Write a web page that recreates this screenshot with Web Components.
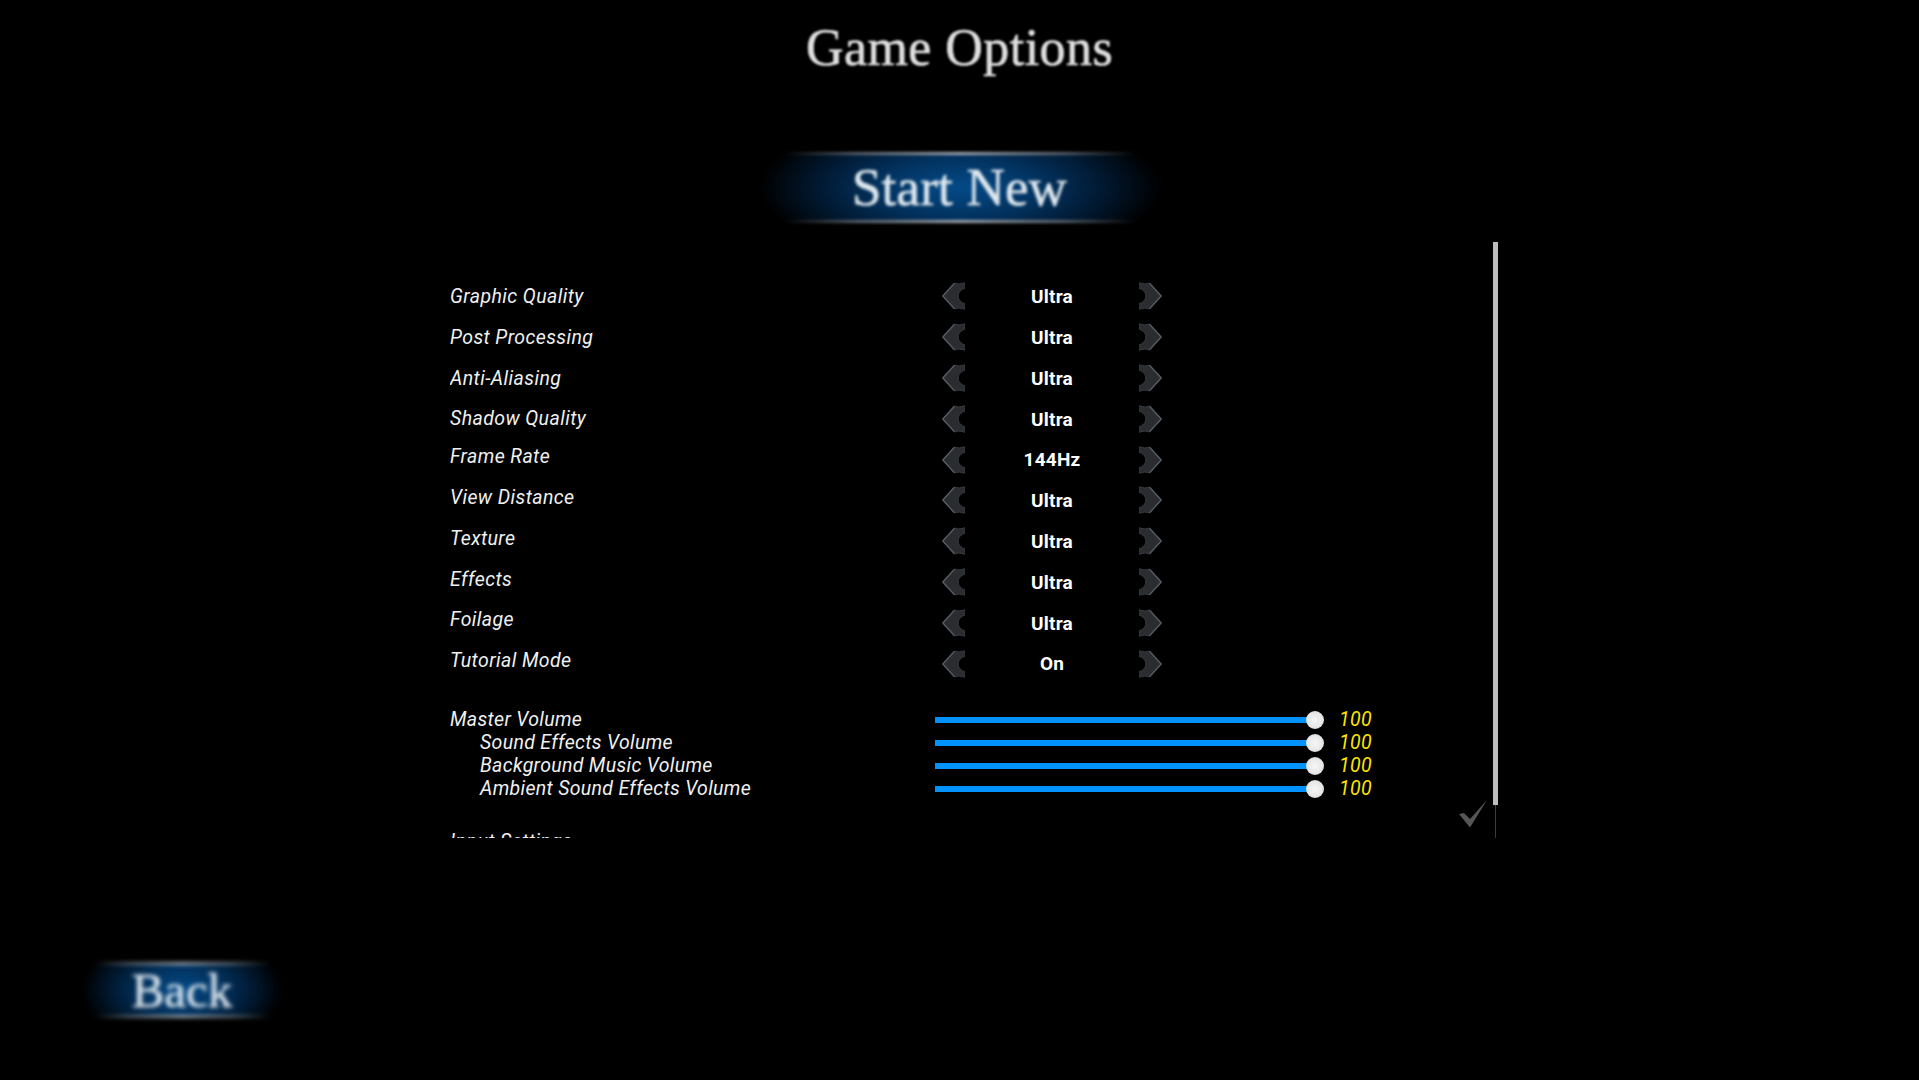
<!DOCTYPE html>
<html>
<head>
<meta charset="utf-8">
<title>Game Options</title>
<style>
  html, body { margin: 0; background: #000; overflow: hidden; }
</style>
</head>
<body>
<options-screen>
  <screen-title slot="title">Game Options</screen-title>
  <menu-banner slot="start" size="large">Start New</menu-banner>
  <options-panel slot="panel">
    <option-row label="Graphic Quality" value="Ultra"></option-row>
    <option-row label="Post Processing" value="Ultra"></option-row>
    <option-row label="Anti-Aliasing" value="Ultra" drop="2"></option-row>
    <option-row label="Shadow Quality" value="Ultra"></option-row>
    <option-row label="Frame Rate" value="144Hz" lift="6"></option-row>
    <option-row label="View Distance" value="Ultra" lift="6"></option-row>
    <option-row label="Texture" value="Ultra" lift="6"></option-row>
    <option-row label="Effects" value="Ultra" lift="4"></option-row>
    <option-row label="Foilage" value="Ultra" lift="6"></option-row>
    <option-row label="Tutorial Mode" value="On" lift="6"></option-row>
    <volume-row label="Master Volume" value="100" first></volume-row>
    <volume-row label="Sound Effects Volume" value="100" indent></volume-row>
    <volume-row label="Background Music Volume" value="100" indent></volume-row>
    <volume-row label="Ambient Sound Effects Volume" value="100" indent></volume-row>
    <section-heading>Input Settings</section-heading>
  </options-panel>
  <menu-banner slot="back" size="small">Back</menu-banner>
</options-screen>

<script>
class OptionsScreen extends HTMLElement {
    constructor() {
        super();
        this.attachShadow({ mode: 'open' });
        this.shadowRoot.innerHTML = `
            <style>
                :host {
                    display: flex;
                    flex-direction: column;
                    width: 1919px;
                    height: 1080px;
                    background: #000;
                }
                .start {
                    display: flex;
                    justify-content: center;
                    margin-top: 60px;
                }
                .panel {
                    margin: 17px 0 0 450px;
                }
                .back {
                    margin: auto 0 60px 82px;
                }
            </style>
            <slot name="title"></slot>
            <div class="start"><slot name="start"></slot></div>
            <div class="panel"><slot name="panel"></slot></div>
            <div class="back"><slot name="back"></slot></div>
        `;
    }
}

class ScreenTitle extends HTMLElement {
    constructor() {
        super();
        this.attachShadow({ mode: 'open' });
        this.shadowRoot.innerHTML = `
            <style>
                :host {
                    display: block;
                    height: 90px;
                    line-height: 95px;
                    text-align: center;
                    font-family: "Liberation Serif", serif;
                    font-size: 52px;
                    letter-spacing: 0.45px;
                    color: #dedede;
                    -webkit-text-stroke: 0.7px #dedede;
                    filter: blur(1.3px);
                }
            </style>
            <slot></slot>
        `;
    }
}

class MenuBanner extends HTMLElement {
    constructor() {
        super();
        this.attachShadow({ mode: 'open' });
        this.shadowRoot.innerHTML = `
            <style>
                :host {
                    --line: linear-gradient(to right, transparent 6%, #555f69 24%, #a4acb4 50%, #555f69 76%, transparent 94%);
                    display: flex;
                    align-items: center;
                    justify-content: center;
                    box-sizing: border-box;
                    font-family: "Liberation Serif", serif;
                    color: #dfe8ef;
                    -webkit-text-stroke: 0.6px #dfe8ef;
                    background:
                        var(--line) 0 2px / 100% 3px no-repeat,
                        var(--line) 0 calc(100% - 2px) / 100% 3px no-repeat,
                        radial-gradient(ellipse 50% 110% at 50% 50%, #034a88 0%, #02325f 40%, #011a33 70%, transparent 100%) 0 4px / 100% calc(100% - 8px) no-repeat;
                    filter: blur(1.4px);
                }
                :host([size="large"]) {
                    width: 400px;
                    height: 75px;
                    padding-bottom: 2px;
                    font-size: 53px;
                    letter-spacing: 0.2px;
                }
                :host([size="small"]) {
                    width: 200px;
                    height: 60px;
                    font-size: 49px;
                    filter: blur(1.9px);
                }
            </style>
            <slot></slot>
        `;
    }
}

class OptionsPanel extends HTMLElement {
    constructor() {
        super();
        this.attachShadow({ mode: 'open' });
        this.shadowRoot.innerHTML = `
            <style>
                :host {
                    display: flex;
                    position: relative;
                    width: 1048px;
                    height: 596px;
                }
                .content {
                    flex: 1;
                    height: 100%;
                    box-sizing: border-box;
                    padding-top: 34px;
                    overflow: hidden;
                }
                .scrollbar {
                    flex: none;
                    display: flex;
                    flex-direction: column;
                    align-items: center;
                    width: 5px;
                }
                .thumb {
                    flex: none;
                    width: 5px;
                    height: 563px;
                    background: #bdbdbd;
                }
                .rail {
                    flex: 1;
                    width: 1px;
                    background: #3c3c3c;
                }
                svg {
                    position: absolute;
                    left: 1009px;
                    top: 558px;
                }
            </style>
            <div class="content"><slot></slot></div>
            <div class="scrollbar"><div class="thumb"></div><div class="rail"></div></div>
            <svg width="28" height="28" viewBox="0 0 28 28">
                <path d="M0 14 L5 13 L11 19 L28 0 L11 27.5 Z" fill="#565656"/>
            </svg>
        `;
    }
}

class OptionRow extends HTMLElement {
    constructor() {
        super();
        this.attachShadow({ mode: 'open' });
    }

    connectedCallback() {
        const lift = this.getAttribute('lift') || 0;
        const drop = this.getAttribute('drop') || 0;
        this.shadowRoot.innerHTML = `
            <style>
                :host {
                    display: flex;
                    align-items: center;
                    height: 40.8px;
                    font-family: Roboto, sans-serif;
                    color: #f0f0f0;
                }
                .label {
                    width: 492px;
                    padding-bottom: ${lift}px;
                    padding-top: ${drop}px;
                    font-size: 19.5px;
                    font-style: italic;
                    letter-spacing: 0.4px;
                }
                .value {
                    width: 174px;
                    padding-top: 0.6px;
                    text-align: center;
                    font-size: 19px;
                    font-weight: 700;
                    letter-spacing: 0.2px;
                    color: #fff;
                }
                svg { flex: none; }
            </style>
            <span class="label">${this.getAttribute('label')}</span>
            <svg width="23" height="28" viewBox="0 0 23 28">
                <path d="M0.4 14 L12.5 1 L17 2 L23 0.8 L23 6.2 C19 7.2 16.2 10.5 16.2 14 C16.2 17.5 19 20.8 23 21.8 L23 27.2 L17 26 L12.5 27 Z" fill="#2a2c30" stroke="#363a3f" stroke-width="1"/>
                <path d="M0.8 14 L12.5 1.2 M0.8 14 L12.5 26.8" fill="none" stroke="#545c64" stroke-width="1.3"/>
            </svg>
            <span class="value">${this.getAttribute('value')}</span>
            <svg width="23" height="28" viewBox="0 0 23 28">
                <path d="M22.6 14 L10.5 1 L6 2 L0 0.8 L0 6.2 C4 7.2 6.8 10.5 6.8 14 C6.8 17.5 4 20.8 0 21.8 L0 27.2 L6 26 L10.5 27 Z" fill="#2a2c30" stroke="#363a3f" stroke-width="1"/>
                <path d="M22.2 14 L10.5 1.2 M22.2 14 L10.5 26.8" fill="none" stroke="#545c64" stroke-width="1.3"/>
            </svg>
        `;
    }
}

class VolumeRow extends HTMLElement {
    constructor() {
        super();
        this.attachShadow({ mode: 'open' });
    }

    connectedCallback() {
        this.shadowRoot.innerHTML = `
            <style>
                :host {
                    display: flex;
                    align-items: center;
                    height: 23px;
                    font-family: Roboto, sans-serif;
                    font-size: 19.5px;
                    font-style: italic;
                    letter-spacing: 0.32px;
                    color: #f0f0f0;
                }
                :host([first]) { margin-top: 25px; }
                :host([indent]) .label { padding-left: 30px; width: 455px; }
                .label { width: 485px; padding-bottom: 2px; }
                .track {
                    flex: none;
                    display: flex;
                    align-items: center;
                    justify-content: flex-end;
                    width: 389px;
                    height: 18px;
                    background: linear-gradient(#0093ff, #0093ff) 0 50% / 380px 6px no-repeat;
                }
                .knob {
                    width: 18px;
                    height: 18px;
                    border-radius: 50%;
                    background: radial-gradient(circle at 50% 50%, #f6f6f6 0, #e8e8e8 55%, #c8c8c8 100%);
                }
                .value {
                    margin-left: 15px;
                    padding-bottom: 2px;
                    letter-spacing: 0.4px;
                    color: #ffe600;
                }
            </style>
            <span class="label">${this.getAttribute('label')}</span>
            <div class="track"><div class="knob"></div></div>
            <span class="value">${this.getAttribute('value')}</span>
        `;
    }
}

class SectionHeading extends HTMLElement {
    constructor() {
        super();
        this.attachShadow({ mode: 'open' });
        this.shadowRoot.innerHTML = `
            <style>
                :host {
                    display: block;
                    margin-top: 29px;
                    line-height: 23px;
                    font-family: Roboto, sans-serif;
                    font-size: 19.5px;
                    font-style: italic;
                    letter-spacing: 0.4px;
                    color: #f0f0f0;
                }
            </style>
            <slot></slot>
        `;
    }
}

customElements.define('options-screen', OptionsScreen);
customElements.define('screen-title', ScreenTitle);
customElements.define('menu-banner', MenuBanner);
customElements.define('options-panel', OptionsPanel);
customElements.define('option-row', OptionRow);
customElements.define('volume-row', VolumeRow);
customElements.define('section-heading', SectionHeading);
</script>
</body>
</html>
